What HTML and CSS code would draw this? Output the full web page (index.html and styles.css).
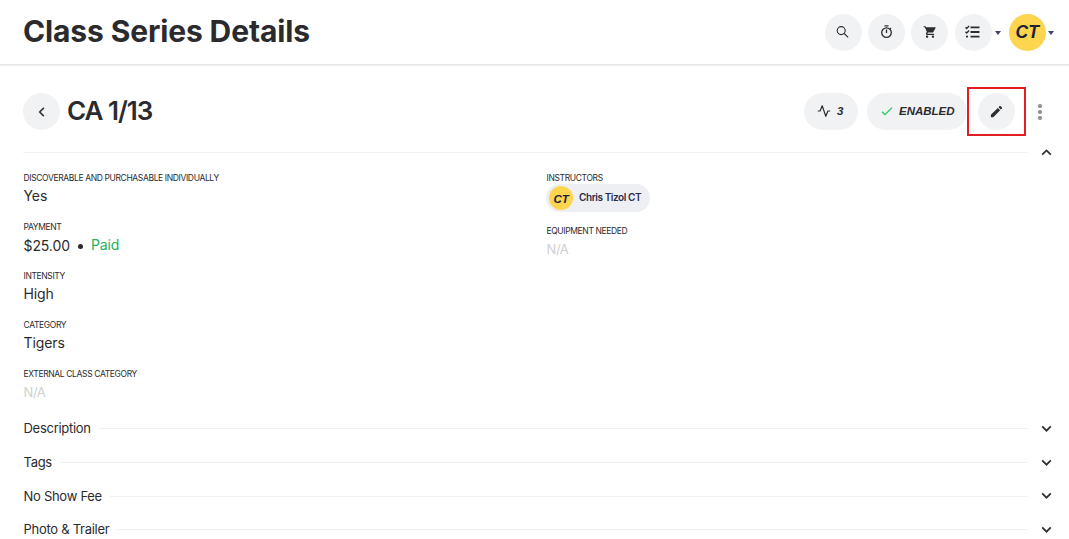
FILE: index.html
```
<!DOCTYPE html>
<html lang="en">
<head>
    <meta charset="UTF-8">
    <meta name="viewport" content="width=device-width, initial-scale=1.0">
    <title>Class Series Details</title>
    <link rel="stylesheet" href="styles.css">
</head>
<body>
    <header class="topbar">
        <h1 class="page-title">Class Series Details</h1>
        <nav class="topbar-actions">
            <button class="icon-btn" aria-label="Search">
                <svg width="16" height="16" viewBox="0 0 16 16" fill="none" stroke="#2d2d30" stroke-width="1.1"><circle cx="6.2" cy="6.6" r="4"/><path d="M9.1 9.5l4 3.8"/></svg>
            </button>
            <button class="icon-btn" aria-label="Timer">
                <svg width="16" height="16" viewBox="0 0 16 16" fill="none" stroke="#2d2d30" stroke-width="1.3"><circle cx="7.5" cy="8.6" r="4.8"/><path d="M5.5 1.8h4M7.5 5.6v3.4M11 5l1-1"/></svg>
            </button>
            <button class="icon-btn" aria-label="Cart">
                <svg width="14" height="14" viewBox="0 0 24 24" fill="#2d2d30"><path d="M7 18c-1.1 0-2 .9-2 2s.9 2 2 2 2-.9 2-2-.9-2-2-2zM1 2v2h2l3.6 7.6-1.4 2.4c-.7 1.3.3 3 1.8 3h12v-2H7.4l1.1-2h7.5c.7 0 1.4-.4 1.7-1l3.9-7c.2-.5-.1-1-.6-1H5.2l-.9-2H1zm16 16c-1.1 0-2 .9-2 2s.9 2 2 2 2-.9 2-2-.9-2-2-2z"/></svg>
            </button>
            <button class="icon-btn" aria-label="Tasks">
                <svg width="16" height="14" viewBox="0 0 16 14" fill="none" stroke="#2d2d30"><path stroke-width="1.9" d="M5.5 2.4h9M5.5 7h9M5.5 11.6h9"/><path stroke-width="1.3" d="M.5 2.3l1.2 1.2L4.1 1M.5 6.8L1.7 8l2.4-2.5"/><circle cx="2" cy="11.6" r="1.1" fill="#2d2d30" stroke="none"/></svg>
            </button>
            <span class="caret"></span>
            <span class="avatar">CT</span>
            <span class="caret caret-user"></span>
        </nav>
    </header>

    <main class="content">
        <div class="series-bar">
            <button class="icon-btn" aria-label="Back">
                <svg width="12" height="12" viewBox="0 0 12 12" fill="none" stroke="#2d2d30" stroke-width="1.5"><path d="M7.8 1.9L3.7 6l4.1 4.1"/></svg>
            </button>
            <h2 class="series-title">CA 1/13</h2>
            <div class="series-actions">
                <span class="pill pill-count">
                    <svg width="14" height="14" viewBox="0 0 14 14" fill="none" stroke="#2d2d30" stroke-width="1.2" stroke-linejoin="round"><path d="M.8 7h2.3L5.2 1.7l3.6 10.6L10.9 7h2.3"/></svg>
                    3
                </span>
                <span class="pill pill-status">
                    <svg width="12" height="10" viewBox="0 0 12 10" fill="none" stroke="#21c95e" stroke-width="1.3"><path d="M1 5.7l3 3L11 1.6"/></svg>
                    ENABLED
                </span>
                <span class="edit-highlight">
                    <button class="icon-btn" aria-label="Edit">
                        <svg width="15" height="15" viewBox="0 0 24 24" fill="#2d2d30"><path d="M3 17.2V21h3.8L17.8 9.9l-3.7-3.7L3 17.2zM20.7 7c.4-.4.4-1 0-1.4l-2.3-2.3c-.4-.4-1-.4-1.4 0l-1.8 1.8 3.7 3.7L20.7 7z"/></svg>
                    </button>
                </span>
                <svg class="more" width="6" height="18" viewBox="0 0 6 18" fill="#8e8e8e"><circle cx="3" cy="3" r="2.1"/><circle cx="3" cy="9" r="2.1"/><circle cx="3" cy="15" r="2.1"/></svg>
            </div>
        </div>

        <div class="section-row section-open">
            <span class="line"></span>
            <svg class="chevron" width="12" height="8" viewBox="0 0 12 8"><path d="M2.2 6.6l4.3-4.2 4.3 4.2"/></svg>
        </div>

        <div class="details">
            <dl class="column">
                <div class="field">
                    <dt>DISCOVERABLE AND PURCHASABLE INDIVIDUALLY</dt>
                    <dd>Yes</dd>
                </div>
                <div class="field">
                    <dt>PAYMENT</dt>
                    <dd class="payment">$25.00 <span class="dot"></span> <span class="paid">Paid</span></dd>
                </div>
                <div class="field">
                    <dt>INTENSITY</dt>
                    <dd>High</dd>
                </div>
                <div class="field">
                    <dt>CATEGORY</dt>
                    <dd>Tigers</dd>
                </div>
                <div class="field">
                    <dt>EXTERNAL CLASS CATEGORY</dt>
                    <dd class="empty">N/A</dd>
                </div>
            </dl>
            <dl class="column">
                <div class="field field-instructors">
                    <dt>INSTRUCTORS</dt>
                    <dd class="chip"><span class="avatar avatar-small">CT</span><span class="chip-name">Chris Tizol CT</span></dd>
                </div>
                <div class="field">
                    <dt>EQUIPMENT NEEDED</dt>
                    <dd class="empty">N/A</dd>
                </div>
            </dl>
        </div>

        <div class="sections">
            <div class="section-row">
                <span class="section-name">Description</span>
                <span class="line"></span>
                <svg class="chevron" width="12" height="8" viewBox="0 0 12 8"><path d="M2.2 1.4l4.3 4.3 4.3-4.3"/></svg>
            </div>
            <div class="section-row">
                <span class="section-name">Tags</span>
                <span class="line"></span>
                <svg class="chevron" width="12" height="8" viewBox="0 0 12 8"><path d="M2.2 1.4l4.3 4.3 4.3-4.3"/></svg>
            </div>
            <div class="section-row">
                <span class="section-name">No Show Fee</span>
                <span class="line"></span>
                <svg class="chevron" width="12" height="8" viewBox="0 0 12 8"><path d="M2.2 1.4l4.3 4.3 4.3-4.3"/></svg>
            </div>
            <div class="section-row">
                <span class="section-name">Photo &amp; Trailer</span>
                <span class="line"></span>
                <svg class="chevron" width="12" height="8" viewBox="0 0 12 8"><path d="M2.2 1.4l4.3 4.3 4.3-4.3"/></svg>
            </div>
        </div>
    </main>
</body>
</html>
```
FILE: styles.css
```
* {
    box-sizing: border-box;
}

body {
    margin: 0;
    height: 539px;
    overflow: hidden;
    background: #fff;
    color: #2b2b2e;
    font-family: Inter, "Liberation Sans", sans-serif;
}

h1, h2, dl, dd {
    margin: 0;
}

.topbar {
    display: flex;
    align-items: center;
    justify-content: space-between;
    height: 65px;
    padding: 0 15px 0 23px;
    border-bottom: 1px solid #e6e6e6;
    box-shadow: 0 1px 1px #f2f2f2;
}

.page-title {
    font-size: 30px;
    line-height: 36px;
    font-weight: 700;
    letter-spacing: -0.13px;
    padding-bottom: 3px;
}

.topbar-actions {
    display: flex;
    align-items: center;
    gap: 6.3px;
}

.icon-btn {
    display: flex;
    align-items: center;
    justify-content: center;
    flex: none;
    width: 37px;
    height: 37px;
    padding: 0;
    border: 0;
    border-radius: 50%;
    background: #f1f2f4;
}

.caret {
    border: 3.5px solid transparent;
    border-top: 4px solid #3f4178;
    border-bottom: 0;
    margin: 2px 1px 0 -4px;
}

.topbar-actions .icon-btn + .caret {
    margin: 2px 1.7px 0 -3.3px;
}

.caret-user {
    margin-right: 0;
}

.avatar {
    display: flex;
    align-items: center;
    justify-content: center;
    width: 37px;
    height: 37px;
    padding-top: 1px;
    border-radius: 50%;
    background: #fed54e;
    color: #20203a;
    font: italic bold 17.5px "Liberation Sans", sans-serif;
}

.avatar-small {
    width: 24px;
    height: 24px;
    font-size: 11.5px;
}

.content {
    padding: 0 17px 0 23px;
}

/* series heading */
.series-bar {
    display: flex;
    align-items: center;
    height: 49px;
    margin-top: 22px;
}

.series-title {
    margin-left: 7px;
    padding-bottom: 1px;
    font-size: 26px;
    line-height: 32px;
    font-weight: 600;
    letter-spacing: -1px;
}

.series-actions {
    display: flex;
    align-items: center;
    margin-left: auto;
    padding-right: 9px;
}

.pill {
    display: flex;
    align-items: center;
    height: 37px;
    padding-bottom: 1px;
    border-radius: 19px;
    background: #f1f2f4;
    font: italic bold 11.5px "Liberation Sans", sans-serif;
}

.pill-count {
    width: 54px;
    padding-left: 13px;
    gap: 6px;
    margin-right: 9px;
}

.pill-status {
    width: 100px;
    padding-left: 14px;
    gap: 6px;
}

.edit-highlight {
    display: flex;
    align-items: center;
    justify-content: center;
    width: 59px;
    height: 49px;
    border: 2px solid #e31e23;
}

.more {
    margin-left: 11px;
}

/* expandable rows */
.section-row {
    display: flex;
    align-items: center;
    height: 33.7px;
}

.section-open {
    height: 32px;
}

.section-name {
    margin: 0 8px 1px 0.5px;
    font-size: 13px;
    letter-spacing: -0.28px;
}

.line {
    flex: 1;
    height: 1px;
    background: #f1f1f1;
}

.chevron {
    margin-left: 12px;
    fill: none;
    stroke: #2d2d30;
    stroke-width: 1.7;
}

/* detail fields */
.details {
    display: grid;
    grid-template-columns: 523px 1fr;
    height: 244px;
    padding-top: 5px;
}

.field {
    height: 49px;
}

.field dt {
    padding-left: 0.5px;
    font-size: 8.5px;
    line-height: 11px;
    letter-spacing: -0.37px;
}

.field dd {
    padding-left: 0.5px;
    font-size: 14px;
    letter-spacing: -0.1px;
    line-height: 24px;
}

.field .empty {
    color: #cfcfd1;
    font-size: 13px;
    letter-spacing: -0.4px;
    line-height: 25px;
}

.field .payment {
    display: flex;
    align-items: center;
}

.dot {
    width: 5px;
    height: 5px;
    margin: 1px 8px 0;
    border-radius: 50%;
    background: #2b2b2e;
}

.paid {
    padding-bottom: 1px;
    color: #27ae60;
}

.field-instructors {
    height: 53px;
}

.field .chip {
    display: flex;
    align-items: center;
    width: 104px;
    height: 28px;
    padding-left: 3px;
    border-radius: 14px;
    background: #eeeff3;
}

.chip-name {
    margin: 0 0 2px 6px;
    line-height: 16px;
    color: #2b2c4b;
    font-size: 10px;
    font-weight: 600;
    letter-spacing: -0.42px;
}
```
